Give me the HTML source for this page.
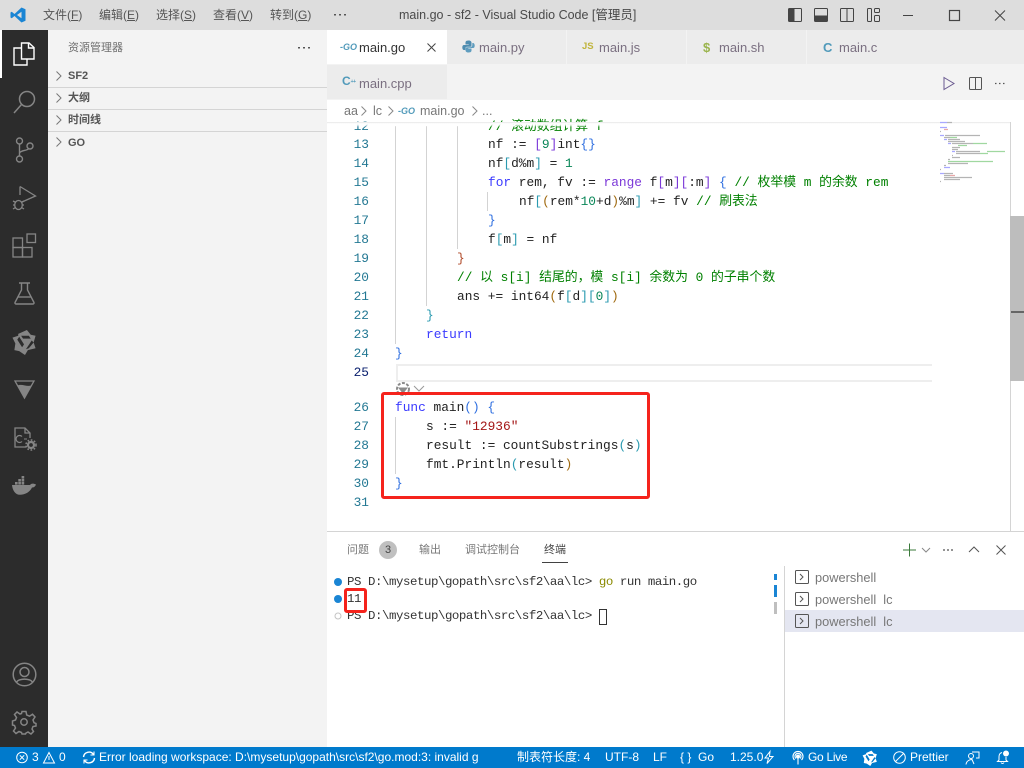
<!DOCTYPE html>
<html><head><meta charset="utf-8"><style>
*{box-sizing:border-box}
html,body{margin:0;padding:0;width:1024px;height:768px;overflow:hidden;background:#fff;font-family:"Liberation Sans","Noto Sans CJK SC",sans-serif;}
.a{position:absolute;white-space:pre}
.m{font-family:"Liberation Mono","Noto Sans CJK SC",monospace;font-size:12.83px;line-height:19px;height:19px}
.tm{font-family:"Liberation Mono","Noto Sans CJK SC",monospace;font-size:12.4px;letter-spacing:-.44px;height:17px;line-height:19px;color:#333}
.n{left:327px;width:42px;text-align:right;color:#237893}
.c{left:395px;color:#222}
.k{color:#3b3bff}.g{color:#008000}.b{color:#2f6fe0}.t{color:#098658}.s{color:#a31515}.p{color:#7b38d8}.y{color:#a06a10}.l{color:#2a9ab0}.f{color:#795e26}
.menu{top:0;height:30px;line-height:31px;font-size:12px;color:#555}
.tab{top:30px;height:34px;background:#ececec;border-right:1px solid #f3f3f3;font-size:13px;line-height:36px;color:#7a6f80}
.sb{top:747px;height:21px;line-height:21px;font-size:12px;color:#fff}
.g1{background:#d3d3d3;width:1px}
svg{position:absolute;overflow:visible}
</style></head><body>
<div class="a" style="left:0;top:0;width:1024px;height:30px;background:#dddddd"></div>
<svg style="left:10px;top:7px" width="16" height="16" viewBox="0 0 16 16"><path d="M11.5 0.5L15.5 2.2V13.8L11.5 15.5L4.5 9L1.7 11.2L0.5 10.5V5.5L1.7 4.8L4.5 7ZM11.5 4.7L7 8L11.5 11.3Z" fill="#1a85d4" fill-rule="evenodd"/></svg>
<div class="a menu" style="left:43px">文件(<u>F</u>)</div>
<div class="a menu" style="left:99px">编辑(<u>E</u>)</div>
<div class="a menu" style="left:156px">选择(<u>S</u>)</div>
<div class="a menu" style="left:213px">查看(<u>V</u>)</div>
<div class="a menu" style="left:270px">转到(<u>G</u>)</div>
<svg style="left:334px;top:14px" width="13" height="2" viewBox="0 0 13 2" fill="#555"><rect width="2" height="1.5"/><rect x="5" width="2" height="1.5"/><rect x="10" width="2" height="1.5"/></svg>
<div class="a" style="left:399px;top:0;height:30px;line-height:31px;font-size:12.5px;color:#4a4a4a">main.go - sf2 - Visual Studio Code [管理员]</div>
<svg style="left:788px;top:8px" width="225" height="15" viewBox="0 0 225 15" fill="none" stroke="#444" stroke-width="1"><rect x="0.5" y="0.5" width="13" height="13" rx="1"/><rect x="1" y="1" width="5" height="12" fill="#444"/><rect x="26.5" y="0.5" width="13" height="13" rx="1"/><rect x="27" y="8" width="12" height="5" fill="#444"/><rect x="52.5" y="0.5" width="13" height="13" rx="1"/><path d="M59 1V13"/><rect x="79.5" y="0.5" width="4" height="13" rx="1"/><rect x="86.5" y="0.5" width="5" height="4" rx="1"/><rect x="86.5" y="7.5" width="5" height="6" rx="1"/><path d="M115 7.5H125"/><rect x="161.5" y="2.5" width="10" height="10" stroke-width="1.2"/><path d="M207 2.5L217 12.5M217 2.5L207 12.5"/></svg>
<div class="a" style="left:0;top:30px;width:48px;height:717px;background:#2c2c2c"></div>
<div class="a" style="left:0;top:30px;width:2px;height:48px;background:#fff"></div>
<svg style="left:13px;top:42px" width="22" height="24" viewBox="0 0 22 24" fill="none" stroke="#fff" stroke-width="1.4"><path d="M8.5 1H16L21 5.5V17H8.5Z"/><path d="M15.5 1.5V6H20.5"/><path d="M8 6H1V23H14V17.5"/></svg>
<svg style="left:13px;top:90px" width="23" height="24" viewBox="0 0 23 24" fill="none" stroke="#858585" stroke-width="1.5"><circle cx="14" cy="9" r="7.5"/><path d="M8.5 14.5L1 23"/></svg>
<svg style="left:15px;top:137px" width="20" height="26" viewBox="0 0 20 26" fill="none" stroke="#858585" stroke-width="1.4"><circle cx="4.5" cy="4" r="3"/><circle cx="15" cy="9" r="3"/><circle cx="4.5" cy="22" r="3"/><path d="M4.5 7V19M4.5 16C6 13 12 14 14 11.5"/></svg>
<svg style="left:12px;top:185px" width="25" height="26" viewBox="0 0 25 26" fill="none" stroke="#858585" stroke-width="1.3"><path d="M8 1.5L23.5 11L10 17"/><path d="M8 1.5V10"/><ellipse cx="6.5" cy="20" rx="3.8" ry="4.5"/><path d="M1 16L4 17.5M12 16L9 17.5M1 20H3M12 20H10M1 24L3.5 22.5M12 24L9.5 22.5"/></svg>
<svg style="left:12px;top:233px" width="25" height="25" viewBox="0 0 25 25" fill="none" stroke="#858585" stroke-width="1.3"><rect x="1" y="5" width="9.5" height="9.5"/><rect x="1" y="14.5" width="9.5" height="9.5"/><rect x="10.5" y="14.5" width="9.5" height="9.5"/><rect x="15" y="1" width="8.5" height="8.5"/></svg>
<svg style="left:14px;top:282px" width="21" height="23" viewBox="0 0 21 23" fill="none" stroke="#858585" stroke-width="1.4"><path d="M5 1H16M7.5 1V8L1 20.5C0.8 21.3 1.2 22 2 22H19C19.8 22 20.2 21.3 20 20.5L13.5 8V1"/><path d="M4.5 15H16.5"/></svg>
<svg style="left:12px;top:329px" width="25" height="26" viewBox="0 0 25 27" fill="#858585"><path fill-rule="evenodd" d="M6 5L15 1L19 6L24 7L22 14L24 20L16 22L13 27L7 23L2 22L3 15L0 9L6 7ZM7 8L5 11L10 19L12 16ZM9 7L11 10H19L17 7ZM20 12L14 21L17 20L22 14Z"/></svg>
<svg style="left:14px;top:380px" width="21" height="19" viewBox="0 0 21 19"><path d="M1 1H20L10.5 18Z" fill="none" stroke="#858585" stroke-width="1.3"/><path d="M3.5 5.5C8 3.5 12 7 17.5 5.5L10.5 17Z" fill="#858585"/></svg>
<svg style="left:14px;top:427px" width="23" height="24" viewBox="0 0 23 24" fill="none" stroke="#858585" stroke-width="1.3"><path d="M12 20H1V1H11L16 6V11"/><path d="M11 1V6H16"/><path d="M8 9.5A3.5 3.5 0 1 0 8 14.5" stroke-width="1.2"/><path d="M10 12H13" stroke-width="1"/><circle cx="17" cy="18" r="3" stroke-width="2.2"/><circle cx="17" cy="18" r="5" stroke-width="1.6" stroke-dasharray="1.7 1.6"/></svg>
<svg style="left:12px;top:477px" width="25" height="19" viewBox="0 0 25 19" fill="#858585"><path d="M0 8H18C19 6.5 21 6 24 7.5C23 10 21.5 10.5 20 10.5C18 15 13 17.8 8 17.8C3 17.8 0.5 13 0 8Z"/><rect x="3" y="5" width="2.6" height="2.6"/><rect x="6.3" y="5" width="2.6" height="2.6"/><rect x="9.6" y="5" width="2.6" height="2.6"/><rect x="6.3" y="2" width="2.6" height="2.6"/><rect x="9.6" y="2" width="2.6" height="2.6"/><rect x="9.6" y="-1" width="2.6" height="2.6"/></svg>
<svg style="left:12px;top:662px" width="25" height="25" viewBox="0 0 25 25" fill="none" stroke="#858585" stroke-width="1.5"><circle cx="12.5" cy="12.5" r="11.3"/><circle cx="12.5" cy="10" r="4.5"/><path d="M4.5 20.5C6 16 19 16 20.5 20.5"/></svg>
<svg style="left:12px;top:710px" width="25" height="25" viewBox="0 0 25 25" fill="none" stroke="#858585" stroke-width="1.5"><circle cx="12" cy="12" r="3.2"/><path d="M10 1.5H14L14.7 5L17.5 6.2L20.5 4.2L23 7L21 10L22 12.7L24 13.5V16L21 16.5L20 19L21.5 21.5L19 24L16 22L14 23L13.5 24H10L9.5 22.5L7 21.5L4 23.5L1.5 21L3.5 18L2.5 15.5L0.5 15V11L3.5 10L4.5 7.5L2.5 4.5L5 2L8 4L9.5 3.5Z"/></svg>
<div class="a" style="left:48px;top:30px;width:279px;height:717px;background:#f3f3f3"></div>
<div class="a" style="left:68px;top:30px;height:35px;line-height:36px;font-size:11px;color:#6f6f6f">资源管理器</div>
<svg style="left:298px;top:47px" width="13" height="2" viewBox="0 0 13 2" fill="#555"><rect width="2" height="1.5"/><rect x="5" width="2" height="1.5"/><rect x="10" width="2" height="1.5"/></svg>
<div class="a" style="left:48px;top:87px;width:279px;height:1px;background:#d4d4d4"></div>
<div class="a" style="left:48px;top:109px;width:279px;height:1px;background:#d4d4d4"></div>
<div class="a" style="left:48px;top:131px;width:279px;height:1px;background:#d4d4d4"></div>
<svg style="left:56px;top:71px" width="6" height="80" viewBox="0 0 6 80" fill="none" stroke="#777" stroke-width="1"><path d="M0.5 0.5L5 5L0.5 9.5M0.5 22.5L5 27L0.5 31.5M0.5 44.5L5 49L0.5 53.5M0.5 66.5L5 71L0.5 75.5"/></svg>
<div class="a" style="left:68px;top:66px;line-height:20px;font-size:11px;font-weight:bold;color:#555">SF2</div>
<div class="a" style="left:68px;top:88px;line-height:21px;font-size:11px;font-weight:bold;color:#555">大纲</div>
<div class="a" style="left:68px;top:110px;line-height:21px;font-size:11px;font-weight:bold;color:#555">时间线</div>
<div class="a" style="left:68px;top:133px;line-height:20px;font-size:11px;font-weight:bold;color:#555">GO</div>
<div class="a" style="left:327px;top:30px;width:697px;height:70px;background:#f3f3f3"></div>
<div class="a tab" style="left:327px;width:120px;background:#fff;color:#333;border:0"><span class="a" style="left:13px;top:0;font-size:9px;font-weight:bold;color:#519aba;font-style:italic;line-height:35px">-GO</span><span class="a" style="left:32px">main.go</span><svg style="left:100px;top:13px" width="9" height="9" viewBox="0 0 9 9" stroke="#444" fill="none"><path d="M0.5 0.5L8.5 8.5M8.5 0.5L0.5 8.5"/></svg></div>
<div class="a tab" style="left:447px;width:120px"><svg style="left:15px;top:10px" width="13" height="13" viewBox="0 0 13 13"><path d="M6.5 0.5C3.5 0.5 3.5 2 3.5 3V4.5H6.7V5H2C0.8 5 0.3 6 0.3 7.5C0.3 9 1 10 2 10H3.3V8.5C3.3 7.5 4.2 6.8 5 6.8H8C9 6.8 9.5 6 9.5 5.2V2.8C9.5 1.5 8.5 0.5 6.5 0.5Z" fill="#4f8db0"/><path d="M6.5 12.5C9.5 12.5 9.5 11 9.5 10V8.5H6.3V8H11C12.2 8 12.7 7 12.7 5.5C12.7 4 12 3 11 3H10.3V5C10.3 6.2 9.2 7.3 8 7.3H5C4 7.3 3.5 8 3.5 8.8V10.2C3.5 11.5 4.5 12.5 6.5 12.5Z" fill="#5f9dbf"/></svg><span class="a" style="left:32px">main.py</span></div>
<div class="a tab" style="left:567px;width:120px"><span class="a" style="left:15px;top:0;font-size:9.5px;font-weight:bold;color:#c0b43c;line-height:33px">JS</span><span class="a" style="left:32px">main.js</span></div>
<div class="a tab" style="left:687px;width:120px"><span class="a" style="left:16px;top:0;font-size:13px;font-weight:bold;color:#9ab44c;line-height:35px">$</span><span class="a" style="left:32px">main.sh</span></div>
<div class="a tab" style="left:807px;width:217px;border:0"><span class="a" style="left:16px;top:0;font-size:13px;font-weight:bold;color:#519aba;line-height:35px">C</span><span class="a" style="left:32px">main.c</span></div>
<div class="a tab" style="left:327px;top:65px;width:120px;height:34px;line-height:37px;background:#ececec;border:0"><span class="a" style="left:15px;top:0;font-size:12px;font-weight:bold;color:#519aba;line-height:33px">C<span style="font-size:5px;letter-spacing:-.5px;position:relative;top:-2px">++</span></span><span class="a" style="left:32px">main.cpp</span></div>
<svg style="left:943px;top:76px" width="64" height="15" viewBox="0 0 64 15" fill="none" stroke="#555" stroke-width="1"><path d="M1 1.5L11 7.5L1 13.5Z" stroke="#6a5a90"/><rect x="26.5" y="1.5" width="12" height="12" rx="1"/><path d="M32.5 2V13"/><path d="M52 7.5h1.5M56 7.5h1.5M60 7.5h1.5" stroke-width="1.2"/></svg>
<div class="a" style="left:344px;top:100px;height:22px;line-height:23px;font-size:12.5px;color:#777">aa</div>
<div class="a" style="left:373px;top:100px;height:22px;line-height:23px;font-size:12.5px;color:#777">lc</div>
<div class="a" style="left:398px;top:100px;height:22px;line-height:22px;font-size:9px;font-weight:bold;font-style:italic;color:#519aba">-GO</div>
<div class="a" style="left:420px;top:100px;height:22px;line-height:23px;font-size:12.5px;color:#777">main.go</div>
<div class="a" style="left:482px;top:100px;height:22px;line-height:23px;font-size:12.5px;color:#777">...</div>
<svg style="left:361px;top:106px" width="116" height="10" viewBox="0 0 116 10" fill="none" stroke="#888"><path d="M0.5 0.5L5 5L0.5 9.5M27.5 0.5L32 5L27.5 9.5M111.5 0.5L116 5L111.5 9.5"/></svg>
<div class="a g1" style="left:395px;top:126px;height:218px"></div>
<div class="a g1" style="left:426px;top:126px;height:180px"></div>
<div class="a g1" style="left:457px;top:126px;height:123px"></div>
<div class="a g1" style="left:487px;top:192px;height:19px"></div>
<div class="a g1" style="left:395px;top:417px;height:57px"></div>
<div class="a" style="left:396px;top:364px;width:536px;height:18px;border:2px solid #eee;border-right:0"></div>
<div class="a m n" style="top:117px">12</div><div class="a m c" style="top:117px;left:488px"><span class="g">// 滚动数组计算 f</span></div>
<div class="a" style="left:327px;top:122px;width:683px;height:5px;background:linear-gradient(#e6e6e6 0,#fff 35%,rgba(255,255,255,.85) 60%,rgba(255,255,255,0))"></div>
<div class="a m n" style="top:135px">13</div><div class="a m c" style="top:135px;left:488px">nf := <span class="p">[</span><span class="t">9</span><span class="p">]</span>int<span class="b">{}</span></div>
<div class="a m n" style="top:154px">14</div><div class="a m c" style="top:154px;left:488px">nf<span class="l">[</span>d%m<span class="l">]</span> = <span class="t">1</span></div>
<div class="a m n" style="top:173px">15</div><div class="a m c" style="top:173px;left:488px"><span class="k">for</span> rem, fv := <span class="p">range</span> f<span class="p">[</span>m<span class="p">][</span>:m<span class="p">]</span> <span class="b">{</span> <span class="g">// 枚举模 m 的余数 rem</span></div>
<div class="a m n" style="top:192px">16</div><div class="a m c" style="top:192px;left:519px">nf<span class="l">[</span><span class="y">(</span>rem*<span class="t">10</span>+d<span class="y">)</span>%m<span class="l">]</span> += fv <span class="g">// 刷表法</span></div>
<div class="a m n" style="top:211px">17</div><div class="a m c" style="top:211px;left:488px"><span class="b">}</span></div>
<div class="a m n" style="top:230px">18</div><div class="a m c" style="top:230px;left:488px">f<span class="l">[</span>m<span class="l">]</span> = nf</div>
<div class="a m n" style="top:249px">19</div><div class="a m c" style="top:249px;left:457px"><span class="y" style="color:#b04a2a">}</span></div>
<div class="a m n" style="top:268px">20</div><div class="a m c" style="top:268px;left:457px"><span class="g">// 以 s[i] 结尾的，模 s[i] 余数为 0 的子串个数</span></div>
<div class="a m n" style="top:287px">21</div><div class="a m c" style="top:287px;left:457px">ans += int64<span class="y">(</span>f<span class="l">[</span>d<span class="l">][</span><span class="t">0</span><span class="l">]</span><span class="y">)</span></div>
<div class="a m n" style="top:306px">22</div><div class="a m c" style="top:306px;left:426px"><span class="l">}</span></div>
<div class="a m n" style="top:325px">23</div><div class="a m c" style="top:325px;left:426px"><span class="k">return</span></div>
<div class="a m n" style="top:344px">24</div><div class="a m c" style="top:344px"><span class="b">}</span></div>
<div class="a m n" style="top:363px;color:#0b216f">25</div>
<svg style="left:395px;top:381px" width="32" height="18" viewBox="0 0 32 18" fill="none" stroke="#8a8a8a"><circle cx="8" cy="8" r="6" stroke-width="2" stroke-dasharray="3 1.5"/><path d="M4 7H12L8 12Z" fill="#8a8a8a"/><path d="M19 5L24 10L29 5" stroke="#999"/></svg>
<div class="a m n" style="top:398px">26</div><div class="a m c" style="top:398px"><span class="k">func</span> main<span class="b">()</span> <span class="b">{</span></div>
<div class="a m n" style="top:417px">27</div><div class="a m c" style="top:417px;left:426px">s := <span class="s">"12936"</span></div>
<div class="a m n" style="top:436px">28</div><div class="a m c" style="top:436px;left:426px">result := countSubstrings<span class="l">(</span>s<span class="l">)</span></div>
<div class="a m n" style="top:455px">29</div><div class="a m c" style="top:455px;left:426px">fmt.Println<span class="l">(</span>result<span class="y">)</span></div>
<div class="a m n" style="top:474px">30</div><div class="a m c" style="top:474px"><span class="b">}</span></div>
<div class="a m n" style="top:493px">31</div>
<div class="a" style="left:381px;top:392px;width:269px;height:107px;border:3px solid #f5231c;border-radius:3px"></div>
<svg style="left:930px;top:115px" width="80" height="70" viewBox="0 0 80 70" fill="none" stroke-width="1.2"><path stroke="#a8a8ff" d="M10 7.5H17M10 12.5H17M10 20.5H14M14 24.5H17M18 28.5H21M22 36.5H25M14 52.5H20M10 58.5H14"/><path stroke="#b4b4b4" d="M17 7.5H22M10 16.5H11M15 20.5H50M14 22.5H20M18 24.5H30M18 26.5H35M22 28.5H43M22 32.5H30M22 34.5H28M26 36.5H50M26 38.5H50M22 40.5H23M22 42.5H30M18 44.5H20M18 48.5H38M14 50.5H16M10 54.5H11M14 58.5H23M14 60.5H20M14 62.5H42M14 64.5H30M10 66.5H11"/><path stroke="#a0d8a0" d="M20 22.5H27M43 28.5H57M28 30.5H37M57 36.5H75M50 38.5H58M18 46.5H63"/><path stroke="#e8a8a8" d="M14 14.5H18M20 60.5H25"/></svg>
<div class="a" style="left:1010px;top:122px;width:1px;height:409px;background:#d4d4d4"></div>
<div class="a" style="left:1010px;top:216px;width:14px;height:165px;background:#bdbdbd"></div>
<div class="a" style="left:1011px;top:311px;width:13px;height:2px;background:#666"></div>
<div class="a" style="left:327px;top:531px;width:697px;height:1px;background:#d4d4d4"></div>
<div class="a" style="left:347px;top:532px;height:35px;line-height:36px;font-size:11px;color:#777">问题</div>
<div class="a" style="left:379px;top:541px;width:18px;height:18px;border-radius:9px;background:#c0c0c0;color:#444;font-size:11px;line-height:18px;text-align:center">3</div>
<div class="a" style="left:419px;top:532px;height:35px;line-height:36px;font-size:11px;color:#777">输出</div>
<div class="a" style="left:465px;top:532px;height:35px;line-height:36px;font-size:11px;color:#777">调试控制台</div>
<div class="a" style="left:544px;top:532px;height:35px;line-height:36px;font-size:11px;color:#444">终端</div>
<div class="a" style="left:542px;top:562px;width:26px;height:1px;background:#424242"></div>
<svg style="left:902px;top:543px" width="105" height="14" viewBox="0 0 105 14" fill="none" stroke="#555"><path d="M1 7H14M7.5 0.5V13.5" stroke="#3a7a3a"/><path d="M20 5L24 9L28 5" stroke="#888"/><path d="M41 7h2M45 7h2M49 7h2" stroke-width="1.2"/><path d="M67 9L72 4L77 9"/><path d="M94.5 2.5L103.5 11.5M103.5 2.5L94.5 11.5"/></svg>
<svg style="left:333px;top:577px" width="10" height="46" viewBox="0 0 10 46"><circle cx="5" cy="5" r="4" fill="#1a85d4"/><circle cx="5" cy="22" r="4" fill="#1a85d4"/><circle cx="5" cy="39" r="3" fill="none" stroke="#c4c4c4"/></svg>
<div class="a tm" style="left:347px;top:573px">PS D:\mysetup\gopath\src\sf2\aa\lc&gt; <span style="color:#8a8a00">go</span> run main.go</div>
<div class="a tm" style="left:347px;top:590px">11</div>
<div class="a tm" style="left:347px;top:607px">PS D:\mysetup\gopath\src\sf2\aa\lc&gt;</div>
<div class="a" style="left:599px;top:609px;width:8px;height:16px;border:1px solid #333"></div>
<div class="a" style="left:344px;top:588px;width:23px;height:25px;border:3px solid #f5231c;border-radius:3px"></div>
<div class="a" style="left:774px;top:574px;width:3px;height:6px;background:#1a85d4"></div>
<div class="a" style="left:774px;top:585px;width:3px;height:12px;background:#1a85d4"></div>
<div class="a" style="left:774px;top:602px;width:3px;height:12px;background:#bfbfbf"></div>
<div class="a" style="left:784px;top:566px;width:1px;height:181px;background:#d4d4d4"></div>
<div class="a" style="left:785px;top:610px;width:239px;height:22px;background:#e4e6f1"></div>
<svg style="left:795px;top:570px" width="15" height="60" viewBox="0 0 15 60" fill="none" stroke="#555"><rect x="0.5" y="0.5" width="13" height="13" rx="1"/><path d="M5 4L8 7L5 10"/><rect x="0.5" y="22.5" width="13" height="13" rx="1"/><path d="M5 26L8 29L5 32"/><rect x="0.5" y="44.5" width="13" height="13" rx="1"/><path d="M5 48L8 51L5 54"/></svg>
<div class="a" style="left:815px;top:566px;height:22px;line-height:23px;font-size:12.8px;color:#777">powershell</div>
<div class="a" style="left:815px;top:588px;height:22px;line-height:23px;font-size:12.8px;color:#777">powershell&nbsp; lc</div>
<div class="a" style="left:815px;top:610px;height:22px;line-height:23px;font-size:12.8px;color:#777">powershell&nbsp; lc</div>
<div class="a" style="left:0;top:747px;width:1024px;height:21px;background:#007acc"></div>
<svg style="left:16px;top:751px" width="50" height="13" viewBox="0 0 50 13" fill="none" stroke="#fff"><circle cx="6" cy="6.5" r="5.3"/><path d="M3.8 4.3L8.2 8.7M8.2 4.3L3.8 8.7"/><path d="M33 1.5L38.5 12H27.5Z"/><path d="M33 5V9"/></svg>
<div class="a sb" style="left:32px">3</div>
<div class="a sb" style="left:59px">0</div>
<svg style="left:82px;top:751px" width="14" height="13" viewBox="0 0 14 13" fill="none" stroke="#fff" stroke-width="1.4"><path d="M1.5 6A5.5 5.5 0 0 1 11.5 3.5M12.5 7A5.5 5.5 0 0 1 2.5 9.5"/><path d="M12 0.5V4H8.5M2 12.5V9H5.5" stroke-width="1.1"/></svg>
<div class="a sb" style="left:99px">Error loading workspace: D:\mysetup\gopath\src\sf2\go.mod:3: invalid g</div>
<div class="a sb" style="left:517px">制表符长度: 4</div>
<div class="a sb" style="left:605px">UTF-8</div>
<div class="a sb" style="left:653px">LF</div>
<div class="a sb" style="left:680px">{ }</div>
<div class="a sb" style="left:698px">Go</div>
<div class="a sb" style="left:730px">1.25.0</div>
<svg style="left:764px;top:751px" width="10" height="13" viewBox="0 0 10 13" fill="none" stroke="#fff"><path d="M6 0.5L1 7H4.5L3 12.5L9 5.5H5.5Z"/></svg>
<svg style="left:791px;top:751px" width="14" height="14" viewBox="0 0 14 14" fill="none" stroke="#fff"><circle cx="7" cy="5.5" r="1.5" fill="#fff"/><path d="M3.5 9A5 5 0 1 1 10.5 9M5 7.5A3 3 0 1 1 9 7.5M7 7V13.5" stroke-width="1.1"/></svg>
<div class="a sb" style="left:808px;letter-spacing:-.3px">Go Live</div>
<svg style="left:862px;top:750px" width="16" height="16" viewBox="0 0 25 27" fill="#fff"><path fill-rule="evenodd" d="M6 5L15 1L19 6L24 7L22 14L24 20L16 22L13 27L7 23L2 22L3 15L0 9L6 7ZM7 8L5 11L10 19L12 16ZM9 7L11 10H19L17 7ZM20 12L14 21L17 20L22 14Z"/></svg>
<svg style="left:893px;top:751px" width="13" height="13" viewBox="0 0 13 13" fill="none" stroke="#fff"><circle cx="6.5" cy="6.5" r="5.8"/><path d="M2.5 10.5L10.5 2.5"/></svg>
<div class="a sb" style="left:910px">Prettier</div>
<svg style="left:965px;top:751px" width="15" height="14" viewBox="0 0 15 14" fill="none" stroke="#fff"><circle cx="6" cy="5" r="2.5"/><path d="M1 13.5C1.5 9.5 5 8.5 7 8.5L9 13M7 1H14V7H11"/></svg>
<svg style="left:996px;top:750px" width="15" height="15" viewBox="0 0 15 15" fill="none" stroke="#fff"><path d="M6 2.5C3.5 3 3 5 3 7V10L1.5 11.5H11.5L10 10V7"/><path d="M5 12.5A1.6 1.6 0 0 0 8 12.5"/><circle cx="10" cy="3.5" r="2.5" fill="#fff"/></svg>
</body></html>
